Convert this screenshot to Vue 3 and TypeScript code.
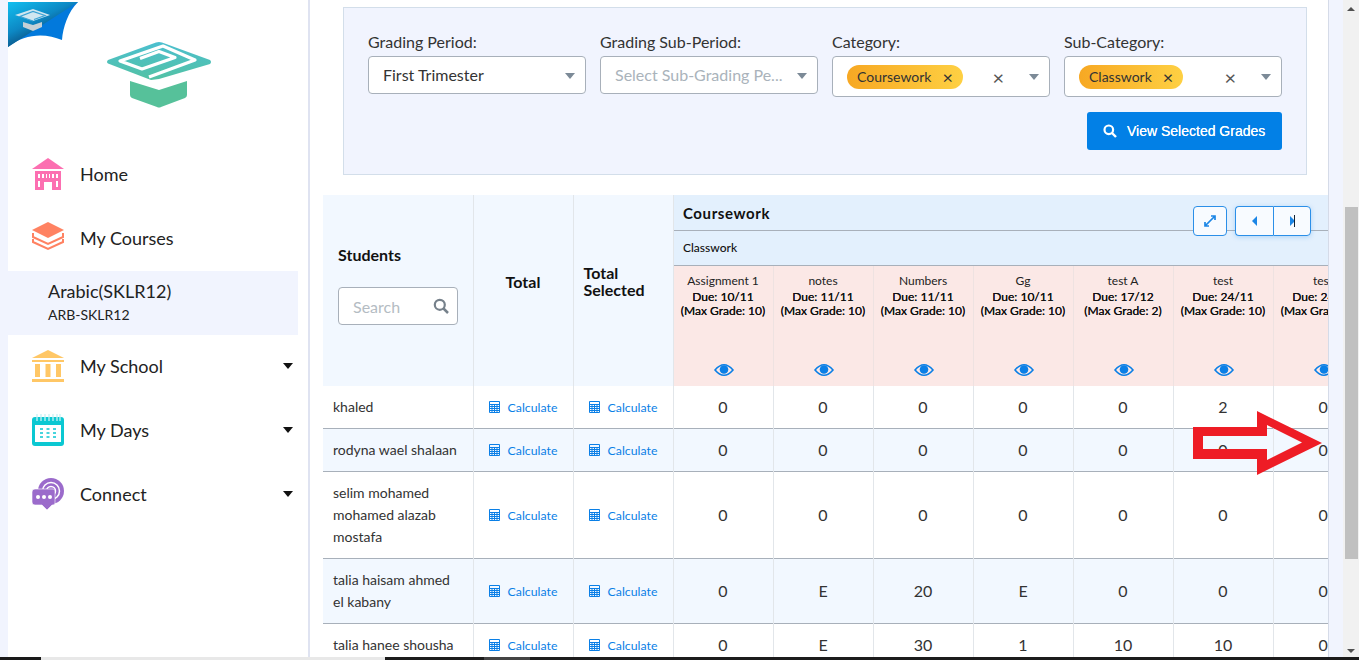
<script setup lang="ts">
interface Row { name: string[]; values: string[]; alt: boolean; h: number }

const cols = [
  { t: 'Assignment 1', d: '10/11', m: 10 },
  { t: 'notes', d: '11/11', m: 10 },
  { t: 'Numbers', d: '11/11', m: 10 },
  { t: 'Gg', d: '10/11', m: 10 },
  { t: 'test A', d: '17/12', m: 2 },
  { t: 'test', d: '24/11', m: 10 },
  { t: 'test', d: '24/11', m: 10 },
]

const rows: Row[] = [
  { name: ['khaled'], values: ['0', '0', '0', '0', '0', '2', '0'], alt: false, h: 42 },
  { name: ['rodyna wael shalaan'], values: ['0', '0', '0', '0', '0', '0', '0'], alt: true, h: 43 },
  { name: ['selim mohamed', 'mohamed alazab', 'mostafa'], values: ['0', '0', '0', '0', '0', '0', '0'], alt: false, h: 87 },
  { name: ['talia haisam ahmed', 'el kabany'], values: ['0', 'E', '20', 'E', '0', '0', '0'], alt: true, h: 65 },
  { name: ['talia hanee shousha'], values: ['0', 'E', '30', '1', '10', '10', '0'], alt: false, h: 43 },
]

const nav = [
  { label: 'Home', icon: 'home', caret: false },
  { label: 'My Courses', icon: 'courses', caret: false },
]
const nav2 = [
  { label: 'My School', icon: 'school', caret: true },
  { label: 'My Days', icon: 'days', caret: true },
  { label: 'Connect', icon: 'connect', caret: true },
]
</script>

<template>
  <div class="page">
    <aside class="sidebar">
      <svg class="corner" width="72" height="50" viewBox="0 0 72 50">
        <defs>
          <linearGradient id="cg1" x1="0" y1="0" x2="0.75" y2="1">
            <stop offset="0" stop-color="#12c0f0" />
            <stop offset="0.45" stop-color="#0d88c4" />
            <stop offset="0.8" stop-color="#0a3f6c" />
          </linearGradient>
        </defs>
        <path d="M0 2H70C60 12 55 27 54 40C38 33 17 33 0 47Z" fill="#0279dc" />
        <path d="M0 2H70L0 47Z" fill="url(#cg1)" />
        <path d="M7 15L25 9L42 15L25 21Z" fill="#cfe6f0" />
        <path d="M25 21L12 16.500L25 11.500L37 15.500L26 19.500" fill="none" stroke="#3aa2d4" stroke-width="1.200" />
        <path d="M15 22L25 25L34 22V27L25 31L15 27Z" fill="#c4d0d6" />
      </svg>
      <svg class="logo" width="106" height="68" viewBox="0 0 106 68">
        <defs>
          <linearGradient id="lg1" x1="0" y1="0" x2="0" y2="1">
            <stop offset="0" stop-color="#4bbfd0" />
            <stop offset="1" stop-color="#53c2a4" />
          </linearGradient>
        </defs>
        <path d="M1 19Q-1 21 1 22.500L44 39L52 38L103 23Q105 21 103 19L55 1.500Q52 0.500 49 1.500Z" fill="url(#lg1)" />
        <path d="M42 36L88 19L56 5L13 20L35 28L68 16.500L52 10.500L33 17.500" fill="none" stroke="#fff" stroke-width="3.200" stroke-linejoin="round" />
        <path d="M23 40L52 49L80 40V54Q80 56 78 57L54 66Q52 67 50 66L25 57Q23 56 23 54Z" fill="#56c19a" />
      </svg>

      <nav class="nav">
        <div v-for="n in nav" :key="n.label" class="nav-item">
          <svg v-if="n.icon === 'home'" class="nav-icon" viewBox="0 0 32 32">
            <path d="M16 0L32 11H0Z" fill="#fc6fb1" />
            <path fill-rule="evenodd" d="M3 13H29V32H20V24H12V32H3ZM6 16V20H8V16ZM10 16V20H12V16ZM14 16V20H15V16ZM17 16V20H18V16ZM20 16V20H22V16ZM24 16V20H26V16ZM6 23V29H8V23ZM24 23V29H26V23Z" fill="#fc6fb1" />
          </svg>
          <svg v-else class="nav-icon" viewBox="0 0 32 32">
            <path d="M16 0L32 8L16 16L0 8Z" fill="#ff8262" />
            <path d="M1 11V15L16 22L31 15V11" fill="none" stroke="#ff8262" stroke-width="2" />
            <path d="M1 17V20L16 27L31 20V17" fill="none" stroke="#ff8262" stroke-width="2" />
          </svg>
          <span class="nav-label">{{ n.label }}</span>
        </div>
        <div class="active-course">
          <div class="course-name">Arabic(SKLR12)</div>
          <div class="course-code">ARB-SKLR12</div>
        </div>
        <div v-for="n in nav2" :key="n.label" class="nav-item">
          <svg v-if="n.icon === 'school'" class="nav-icon" viewBox="0 0 32 32">
            <path d="M16 0L32 8H0Z" fill="#ffc766" />
            <path d="M0 10H32V12H0ZM3 14H8V27H3ZM13.500 14H18.500V27H13.500ZM24 14H29V27H24ZM0 29H32V32H0Z" fill="#ffc766" />
          </svg>
          <svg v-else-if="n.icon === 'days'" class="nav-icon" viewBox="0 0 32 32">
            <rect x="0" y="3" width="32" height="29" rx="3" fill="#0bc8d2" />
            <rect x="3" y="11" width="26" height="17" fill="#fff" />
            <path d="M5 0V7M9 0V7M13 0V7M17 0V7M21 0V7M25 0V7M28 0V7" stroke="#c6f2f4" stroke-width="1.300" />
            <path d="M8 15H11M14.500 15H17.500M21 15H24M8 19H11M14.500 19H17.500M21 19H24M8 23H11M14.500 23H17.500M21 23H24" stroke="#0bc8d2" stroke-width="1.600" />
          </svg>
          <svg v-else class="nav-icon" viewBox="0 0 32 32">
            <circle cx="19" cy="13" r="13" fill="#9b6bcb" />
            <circle cx="19" cy="13" r="8.500" fill="none" stroke="#fff" stroke-width="1.500" />
            <circle cx="19" cy="13" r="4.500" fill="none" stroke="#fff" stroke-width="1.500" />
            <path d="M3 11H21Q23 11 23 13V25Q23 27 21 27H20L15 32L10 27H3Q0 27 0 24V14Q0 11 3 11Z" fill="#9b6bcb" stroke="#fff" stroke-width="0.600" />
            <circle cx="6" cy="19" r="2" fill="#fff" />
            <circle cx="12" cy="19" r="2" fill="#fff" />
            <circle cx="18" cy="19" r="2" fill="#fff" />
          </svg>
          <span class="nav-label">{{ n.label }}</span>
          <span v-if="n.caret" class="caret"></span>
        </div>
      </nav>
    </aside>

    <main class="main">
      <section class="filters">
        <div class="filter-grid">
          <div class="field">
            <label>Grading Period:</label>
            <div class="select"><span class="value">First Trimester</span><span class="sel-caret"></span></div>
          </div>
          <div class="field">
            <label>Grading Sub-Period:</label>
            <div class="select"><span class="value placeholder">Select Sub-Grading Pe...</span><span class="sel-caret"></span></div>
          </div>
          <div class="field">
            <label>Category:</label>
            <div class="select multi">
              <span class="chip">Coursework<span class="chip-x">×</span></span>
              <span class="clear">×</span><span class="sel-caret"></span>
            </div>
          </div>
          <div class="field">
            <label>Sub-Category:</label>
            <div class="select multi">
              <span class="chip">Classwork<span class="chip-x">×</span></span>
              <span class="clear">×</span><span class="sel-caret"></span>
            </div>
          </div>
        </div>
        <div class="actions">
          <button class="view-btn">
            <svg width="14" height="14" viewBox="0 0 14 14"><circle cx="5.800" cy="5.800" r="4.300" fill="none" stroke="#fff" stroke-width="2.200" /><path d="M9 9L13 13" stroke="#fff" stroke-width="2.400" /></svg>
            View Selected Grades
          </button>
        </div>
      </section>

      <div class="table-wrap">
        <table class="grades">
          <colgroup>
            <col class="c-student" />
            <col class="c-total" />
            <col class="c-total" />
            <col v-for="(c, i) in cols" :key="i" class="c-total" />
          </colgroup>
          <thead>
            <tr class="h1">
              <th rowspan="3" class="th-side th-students">
                <div class="students-title">Students</div>
                <div class="search"><span>Search</span>
                  <svg width="16" height="16" viewBox="0 0 16 16"><circle cx="6.800" cy="6.800" r="5" fill="none" stroke="#76818b" stroke-width="2.200" /><path d="M10.500 10.500L15 15" stroke="#76818b" stroke-width="2.500" /></svg>
                </div>
              </th>
              <th rowspan="3" class="th-side th-center">Total</th>
              <th rowspan="3" class="th-side th-sel">Total<br />Selected</th>
              <th colspan="7" class="th-group">Coursework</th>
            </tr>
            <tr class="h2"><th colspan="7" class="th-sub">Classwork</th></tr>
            <tr class="h3">
              <th v-for="(c, i) in cols" :key="i" class="th-assign">
                <div class="a-title">{{ c.t }}</div>
                <div class="a-meta">Due: {{ c.d }}</div>
                <div class="a-meta">(Max Grade: {{ c.m }})</div>
                <svg class="eye" width="20" height="14" viewBox="0 0 20 14">
                  <path d="M1 7Q10 -3.500 19 7Q10 17.500 1 7Z" fill="none" stroke="#0a7fe6" stroke-width="1.600" />
                  <circle cx="10" cy="6.500" r="4.300" fill="#0a7fe6" />
                </svg>
              </th>
            </tr>
          </thead>
          <tbody>
            <tr v-for="r in rows" :key="r.name[0]" :class="{ alt: r.alt }" :style="{ height: r.h + 'px' }">
              <td class="td-name"><div v-for="l in r.name" :key="l">{{ l }}</div></td>
              <td v-for="k in 2" :key="k" class="td-calc">
                <span class="calc">
                  <svg width="11" height="12" viewBox="0 0 11 12">
                    <path d="M0.500 0.500H10.500V11.500H0.500ZM0.500 3.500H10.500M0.500 5.500H10.500M0.500 7.500H10.500M0.500 9.500H10.500M3 3.500V11.500M5.500 3.500V11.500M8 3.500V11.500" fill="none" stroke="#0a7fe6" stroke-width="1" />
                  </svg>
                  Calculate
                </span>
              </td>
              <td v-for="(v, i) in r.values" :key="i" class="td-val">{{ v }}</td>
            </tr>
          </tbody>
        </table>

        <div class="table-tools">
          <button class="tool">
            <svg width="12" height="12" viewBox="0 0 12 12"><path d="M1 11L11 1M7 1H11V5M1 7V11H5" fill="none" stroke="#1c86e6" stroke-width="1.700" /></svg>
          </button>
          <div class="tool-group">
            <button class="tool-half"><span class="tri-left"></span></button>
            <button class="tool-half"><span class="tri-right"></span><span class="tri-bar"></span></button>
          </div>
        </div>

        <svg class="red-arrow" width="130" height="66" viewBox="0 0 130 66">
          <path fill-rule="evenodd" d="M0 17H64V1L129 33L64 65V49H0ZM10 26V39H74V50L109 32.500L74 15V26Z" fill="#ee1c25" />
        </svg>
      </div>
    </main>

    <div class="gutter"></div>
    <div class="scrollbar">
      <span class="sb-up"></span>
      <div class="sb-track"><div class="sb-thumb"></div></div>
      <span class="sb-down"></span>
    </div>
    <div class="taskbar">
      <div class="tb-a"></div><div class="tb-b"></div><div class="tb-c"></div><div class="tb-d"></div><div class="tb-c tb-grow"></div>
    </div>
  </div>
</template>

<style>
html, body { margin: 0; padding: 0; height: 100%; overflow: hidden; background: #f1f4fe; }
</style>

<style scoped>
* { box-sizing: border-box; }
.page {
  position: relative;
  display: flex;
  width: 1359px;
  height: 660px;
  padding-left: 8px;
  overflow: hidden;
  background: #f1f4fe;
  font-family: Lato, "Noto Sans", sans-serif;
  color: #222;
}
.sidebar {
  position: relative;
  flex: 0 0 302px;
  background: #fff;
  border-right: 2px solid #dfe3f1;
  padding-top: 41px;
}
.corner { position: absolute; left: 0; top: 0; }
.logo { display: block; margin-left: 99px; }
.nav { margin-top: 33px; }
.nav-item {
  display: flex;
  align-items: center;
  height: 64px;
  padding-left: 24px;
  padding-right: 15px;
}
.nav-icon { width: 32px; height: 32px; flex: none; }
.nav-label { margin-left: 16px; font-size: 18px; color: #222; flex: 1; }
.caret { width: 0; height: 0; border: 5.500px solid transparent; border-top: 6px solid #111; border-bottom: 0; }
.active-course {
  width: 290px;
  height: 64px;
  margin: 1px 0 -1px;
  padding: 8px 0 0 40px;
  background: #f1f4fe;
}
.course-name { font-size: 18px; line-height: 24px; color: #222; }
.course-code { font-size: 14px; line-height: 22px; margin-top: 1px; color: #222; }

.main {
  flex: 0 0 1018px;
  background: #fff;
  padding: 7px 0 0 13px;
  position: relative;
}
.filters {
  width: 964px;
  height: 168px;
  margin-left: 20px;
  padding: 23px 24px 0;
  background: #f1f4fe;
  border: 1px solid #d3deea;
}
.filter-grid { display: grid; grid-template-columns: repeat(4, 218px); column-gap: 14px; align-items: start; }
.field label { display: block; font-size: 16px; line-height: 22px; padding-bottom: 3px; color: #333; }
.select {
  display: flex;
  align-items: center;
  height: 38px;
  padding: 0 10px 0 14px;
  background: #fff;
  border: 1px solid #a8b0ba;
  border-radius: 4px;
  font-size: 16px;
  color: #333;
}
.select.multi { height: 41px; padding-left: 14px; }
.value { flex: 1; white-space: nowrap; overflow: hidden; margin-top: -2px; }
.placeholder { color: #aab3bb; }
.sel-caret { width: 0; height: 0; border: 5.500px solid transparent; border-top: 6px solid #7c8a97; border-bottom: 0; margin-top: 1px; flex: none; }
.chip {
  display: inline-flex;
  align-items: center;
  height: 24px;
  padding: 0 10px;
  border-radius: 12px;
  background: linear-gradient(90deg, #f7a823, #fed043);
  font-size: 14px;
  color: #333;
}
.chip-x { margin-left: 11px; font-size: 18px; line-height: 20px; color: #333; }
.clear { margin-left: auto; margin-right: 25px; font-size: 20px; line-height: 20px; color: #555; }
.actions { display: flex; justify-content: flex-end; margin-top: 15px; }
.view-btn {
  display: inline-flex;
  align-items: center;
  gap: 10px;
  width: 195px;
  height: 38px;
  padding: 0 0 0 16px;
  border: 0;
  border-radius: 3px;
  background: #0280e6;
  color: #fff;
  font-family: "Liberation Sans", Arial, sans-serif;
  font-size: 14px;
  text-shadow: 0 0 0.6px #fff;
}

.table-wrap {
  position: relative;
  width: 1005px;
  height: 465px;
  margin-top: 20px;
  overflow: hidden;
}
.grades {
  table-layout: fixed;
  border-collapse: collapse;
  width: 1050px;
}
.c-student { width: 150px; }
.c-total { width: 100px; }
.grades th, .grades td { padding: 0; border: 0; }
.th-side { background: #f2f8ff; border-right: 1px solid #e2e6ea !important; font-size: 16px; font-weight: 700; color: #111; vertical-align: middle; }
.th-students { text-align: left; padding: 0 15px 11px !important; }
.students-title { margin-bottom: 22px; line-height: 20px; }
.search {
  display: flex;
  align-items: center;
  justify-content: space-between;
  width: 120px;
  height: 38px;
  padding: 0 8px 0 14px;
  border: 1px solid #a8b0ba;
  border-radius: 4px;
  background: #fff;
  font-size: 16px;
  font-weight: 400;
  color: #b4bcc3;
}
.th-center { text-align: center; padding-bottom: 19px !important; }
.th-sel { text-align: left; padding: 0 0 19px 10px !important; line-height: 17px; }
.h1 { height: 35px; }
.h2 { height: 35px; }
.h3 { height: 121px; }
.th-group {
  background: #e3f0fd;
  border-bottom: 1px solid #a8b0ba !important;
  text-align: left;
  padding: 1px 0 0 9.500px !important;
  font-size: 15px;
  letter-spacing: 0.6px;
  color: #111;
}
.th-sub {
  background: #e3f0fd;
  border-bottom: 1px solid #a8b0ba !important;
  text-align: left;
  padding-left: 9.500px !important;
  font-size: 12px;
  font-weight: 500;
  color: #111;
}
.th-assign {
  position: relative;
  background: #fbe8e6;
  border-right: 1px solid #eee2e1 !important;
  text-align: center;
  vertical-align: top;
  padding-top: 8px !important;
  font-size: 12px;
  font-weight: 400;
  line-height: 14px;
  color: #111;
}
.a-title { margin-bottom: 2px; color: #222; }
.a-meta { white-space: nowrap; text-shadow: 0 0 0.2px #111; }
.eye { position: absolute; left: 40px; bottom: 9px; }
tbody tr { border-bottom: 1px solid #a8b0ba; background: #fff; }
tbody tr.alt { background: #f2f8ff; }
.td-name { padding: 0 10px !important; font-size: 14px; line-height: 22px; color: #333; border-right: 1px solid #e2e6ea !important; }
.td-calc { text-align: center; border-right: 1px solid #e2e6ea !important; }
.calc { display: inline-flex; align-items: center; gap: 8px; padding-top: 2px; font-size: 12.300px; color: #0a7fe6; }
.td-val { text-align: center; font-size: 16px; color: #333; border-right: 1px solid #e2e6ea !important; }
thead { box-shadow: 0 2px 4px rgba(0,0,0,0.05); }

.table-tools { position: absolute; top: 11px; left: 870px; display: flex; gap: 8px; }
.tool, .tool-half {
  display: flex;
  align-items: center;
  justify-content: center;
  padding: 0;
  background: #f8fbff;
  border: 1px solid #2b8fe8;
}
.tool { width: 34px; height: 30px; border-radius: 4px; }
.tool-group { display: flex; box-shadow: 0 1px 5px rgba(10,127,230,0.25); border-radius: 4px; }
.tool-half { position: relative; width: 38px; height: 30px; }
.tool-half:first-child { border-radius: 4px 0 0 4px; border-right: 0; }
.tool-half:last-child { border-radius: 0 4px 4px 0; }
.tri-left { width: 0; height: 0; border: 5px solid transparent; border-right: 5px solid #1c86e6; border-left: 0; }
.tri-right { width: 0; height: 0; border: 5px solid transparent; border-left: 5px solid #1c86e6; border-right: 0; }
.tri-bar { width: 1px; height: 12px; background: #123; margin-left: -1px; }
.red-arrow { position: absolute; left: 870px; top: 215px; }

.gutter { flex: 0 0 15px; background: #f1f4fe; border-left: 1px solid #d5dbe8; }
.scrollbar {
  flex: 0 0 16px;
  display: flex;
  flex-direction: column;
  align-items: center;
  background: #f1f1f1;
  height: 660px;
  position: relative;
}
.sb-track { flex: 1; width: 100%; padding-top: 196px; padding-bottom: 90px; }
.sb-thumb { height: 100%; width: 13px; margin: 0 auto; background: #c0c0c0; }
.sb-up { margin-top: 7px; width: 0; height: 0; border: 4px solid transparent; border-bottom: 4px solid #505050; border-top: 0; }
.sb-down { margin-bottom: 7px; width: 0; height: 0; border: 4px solid transparent; border-top: 4px solid #505050; border-bottom: 0; }
.taskbar { position: absolute; left: 0; right: 0; bottom: 0; height: 3px; display: flex; }
.tb-a { width: 41px; background: #1a1a1a; }
.tb-b { width: 344px; background: #e8e8e8; }
.tb-c { width: 99px; background: #1c1c1c; }
.tb-d { width: 46px; background: #444; }
.tb-grow { flex: 1; }
</style>
